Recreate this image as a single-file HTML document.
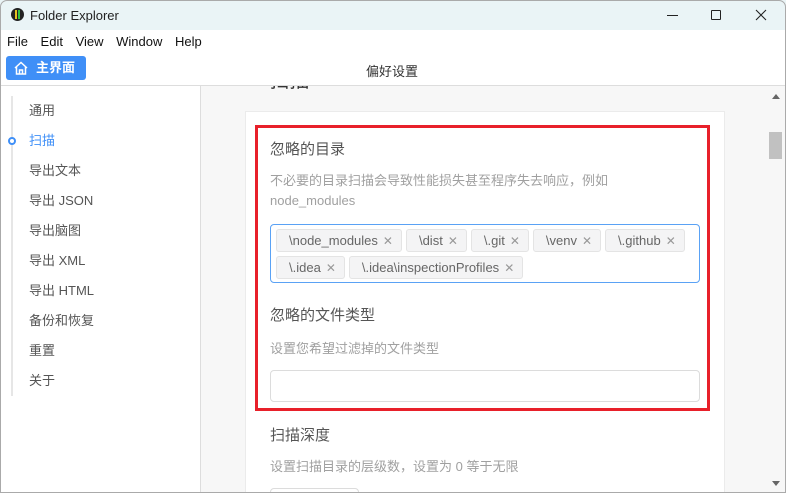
<!DOCTYPE html>
<html><head><meta charset="utf-8"><style>
*{margin:0;padding:0;box-sizing:border-box}
body{width:786px;height:493px;overflow:hidden;background:#fff;font-family:"Liberation Sans","Noto Sans CJK SC",sans-serif;position:relative}
.abs{position:absolute}
.tag{display:inline-block;height:23px;line-height:21px;border:1px solid #e4e4e4;background:#f4f4f5;color:#666;font-size:13px;padding:0 8px 0 12px;border-radius:3px;margin-right:4px;margin-bottom:4px}
.tag span{color:#999;margin-left:5px;font-size:12px}
.nav div{height:30px;line-height:30px;font-size:13px;color:#555}
</style></head><body>
<div class="abs" style="left:0;top:0;width:786px;height:30px;background:#eaf4f6"></div>
<div class="abs" style="left:11px;top:8px;width:13px;height:13px;border-radius:50%;background:#222"></div>
<div class="abs" style="left:15px;top:10px;width:2px;height:9px;background:#e8c020"></div>
<div class="abs" style="left:18px;top:10px;width:2px;height:9px;background:#30c040"></div>
<div class="abs" style="left:30px;top:8px;font-size:13px;color:#222">Folder Explorer</div>
<div class="abs" style="left:667px;top:15px;width:11px;height:1px;background:#222"></div>
<div class="abs" style="left:711px;top:10px;width:10px;height:10px;border:1px solid #222;border-radius:1px"></div>
<svg class="abs" style="left:755px;top:9px" width="12" height="12" viewBox="0 0 12 12"><path d="M1 1L11 11M11 1L1 11" stroke="#222" stroke-width="1.1"/></svg>
<div class="abs" style="left:7px;top:34px;font-size:13px;color:#111;word-spacing:9px">File Edit View Window Help</div>
<div class="abs" style="left:6px;top:56px;width:80px;height:24px;background:#3f8ff7;border-radius:3px;color:#fff;font-size:13px;line-height:24px;padding-left:30px;font-weight:bold">主界面</div>
<svg class="abs" style="left:13px;top:60px" width="16" height="16" viewBox="0 0 16 16"><path d="M2 8L8 2.5 14 8M3.5 7v7h9V7M6.5 14v-4h3v4" fill="none" stroke="#fff" stroke-width="1.5"/></svg>
<div class="abs" style="left:366px;top:61px;font-size:13px;color:#333">偏好设置</div>
<div class="abs" style="left:0;top:85px;width:786px;height:1px;background:#ddd"></div>
<div class="abs" style="left:200px;top:86px;width:1px;height:407px;background:#ddd"></div>
<div class="abs" style="left:201px;top:86px;width:565px;height:407px;background:#f7f7f7;overflow:hidden">
 <div class="abs" style="left:44px;top:-22px;font-size:20px;color:#333">▭ 扫描</div>
 <div class="abs" style="left:44px;top:25px;width:480px;height:400px;background:#fff;border:1px solid #ebebeb"></div>
 <div class="abs" style="left:54px;top:39px;width:455px;height:286px;border:3px solid #e8202a"></div>
 <div class="abs" style="left:69px;top:52px;font-size:15px;color:#555">忽略的目录</div>
 <div class="abs" style="left:69px;top:85px;font-size:13px;color:#a0a0a0;line-height:20px">不必要的目录扫描会导致性能损失甚至程序失去响应，例如<br>node_modules</div>
 <div class="abs" style="left:69px;top:138px;width:430px;height:59px;border:1px solid #5aa2f5;border-radius:4px;padding:4px 0 0 5px;font-size:0">
  <div class="tag">\node_modules<span>✕</span></div><div class="tag">\dist<span>✕</span></div><div class="tag">\.git<span>✕</span></div><div class="tag">\venv<span>✕</span></div><div class="tag">\.github<span>✕</span></div><div class="tag">\.idea<span>✕</span></div><div class="tag">\.idea\inspectionProfiles<span>✕</span></div>
 </div>
 <div class="abs" style="left:69px;top:218px;font-size:15px;color:#555">忽略的文件类型</div>
 <div class="abs" style="left:69px;top:252px;font-size:13px;color:#a0a0a0">设置您希望过滤掉的文件类型</div>
 <div class="abs" style="left:69px;top:284px;width:430px;height:32px;border:1px solid #dcdcdc;border-radius:4px;background:#fff"></div>
 <div class="abs" style="left:69px;top:338px;font-size:15px;color:#555">扫描深度</div>
 <div class="abs" style="left:69px;top:370px;font-size:13px;color:#a0a0a0">设置扫描目录的层级数，设置为 0 等于无限</div>
 <div class="abs" style="left:69px;top:402px;width:89px;height:30px;border:1px solid #dcdcdc;border-radius:4px"></div>
</div>
<div class="abs" style="left:766px;top:86px;width:20px;height:407px;background:#f7f7f7"></div>
<div class="abs" style="left:772px;top:94px;width:0;height:0;border-left:4px solid transparent;border-right:4px solid transparent;border-bottom:5px solid #666"></div>
<div class="abs" style="left:769px;top:132px;width:13px;height:27px;background:#c1c1c1"></div>
<div class="abs" style="left:772px;top:481px;width:0;height:0;border-left:4px solid transparent;border-right:4px solid transparent;border-top:5px solid #666"></div>
<div class="abs" style="left:11px;top:96px;width:2px;height:300px;background:#e6e6e6"></div>
<div class="abs" style="left:8px;top:137px;width:8px;height:8px;border:2px solid #3f8ff7;border-radius:50%;background:#fff"></div>
<div class="abs nav" style="left:29px;top:96px">
<div>通用</div><div style="color:#3f8ff7">扫描</div><div>导出文本</div><div>导出 JSON</div><div>导出脑图</div><div>导出 XML</div><div>导出 HTML</div><div>备份和恢复</div><div>重置</div><div>关于</div>
</div>
<div class="abs" style="left:0;top:0;width:786px;height:493px;border:1px solid #aaa;border-radius:7px 7px 0 0;pointer-events:none"></div>
</body></html>
